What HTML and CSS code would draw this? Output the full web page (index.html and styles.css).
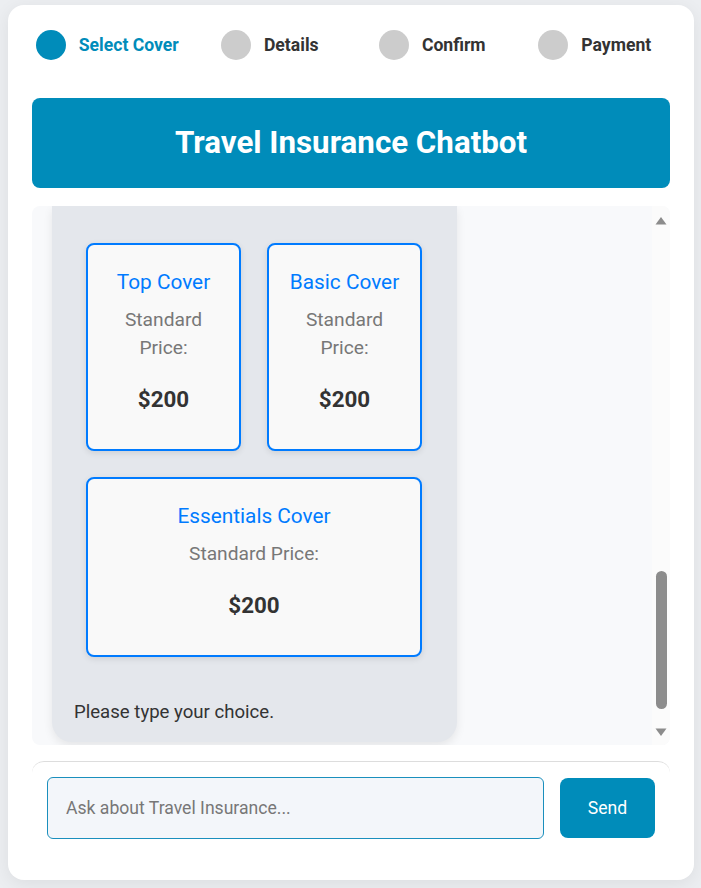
FILE: index.html
```html
<!DOCTYPE html>
<html lang="en">
<head>
<meta charset="utf-8">
<title>Travel Insurance Chatbot</title>
<link rel="stylesheet" href="styles.css">
</head>
<body>
<div class="app">
  <div class="steps">
    <div class="step active"><span class="dot"></span><span class="label">Select Cover</span></div>
    <div class="step"><span class="dot"></span><span class="label">Details</span></div>
    <div class="step"><span class="dot"></span><span class="label">Confirm</span></div>
    <div class="step"><span class="dot"></span><span class="label">Payment</span></div>
  </div>

  <div class="header">Travel Insurance Chatbot</div>

  <div class="chat">
    <div class="messages">
      <div class="msg bot">
        <div class="cards">
          <div class="card">
            <h3 class="card-title">Top Cover</h3>
            <p class="card-label">Standard Price:</p>
            <p class="card-price">$200</p>
          </div>
          <div class="card">
            <h3 class="card-title">Basic Cover</h3>
            <p class="card-label">Standard Price:</p>
            <p class="card-price">$200</p>
          </div>
          <div class="card wide">
            <h3 class="card-title">Essentials Cover</h3>
            <p class="card-label">Standard Price:</p>
            <p class="card-price">$200</p>
          </div>
        </div>
        <p class="msg-text">Please type your choice.</p>
      </div>
    </div>
    <div class="scrollbar">
      <svg class="arrow" width="12" height="9" viewBox="0 0 12 9"><path d="M6 1 L11.5 8.5 L0.5 8.5 Z" fill="#8c8c8c"/></svg>
      <div class="thumb"></div>
      <svg class="arrow" width="12" height="9" viewBox="0 0 12 9"><path d="M0.5 0.5 L11.5 0.5 L6 8 Z" fill="#8c8c8c"/></svg>
    </div>
  </div>

  <div class="input-area">
    <input class="input" type="text" placeholder="Ask about Travel Insurance...">
    <button class="send" type="button">Send</button>
  </div>
</div>
</body>
</html>
```

FILE: styles.css
```css
* { box-sizing: border-box; }

html, body {
  margin: 0;
  padding: 0;
}

body {
  background: #eceef1;
  font-family: Roboto, "Liberation Sans", Arial, sans-serif;
  color: #333;
  padding: 5px 7px 8px 8px;
}

.app {
  background: #ffffff;
  border-radius: 16px;
  box-shadow: 0 4px 18px rgba(0, 0, 0, 0.07);
  padding: 25px 24px 26px;
}

.steps {
  display: flex;
  margin: 0 -6px 38px;
}

.step {
  flex: 1;
  display: flex;
  align-items: center;
  justify-content: center;
  gap: 13px;
  height: 30px;
}

.dot {
  width: 30px;
  height: 30px;
  border-radius: 50%;
  background: #cccccc;
  flex: none;
}

.label {
  font-size: 17.6px;
  font-weight: 700;
  color: #333;
}

.step.active .dot { background: #008cba; }
.step.active .label { color: #008cba; }

.header {
  background: #008cba;
  color: #fff;
  border-radius: 8px;
  text-align: center;
  font-size: 31.3px;
  font-weight: 700;
  line-height: 38px;
  padding: 26px 10px;
  margin-bottom: 18px;
}

.chat {
  height: 539px;
  background: #f8f9fb;
  border-radius: 8px;
  overflow: hidden;
  display: flex;
}

.messages {
  flex: 1;
  display: flex;
  flex-direction: column;
  padding: 0 0 3px 20px;
}

.msg {
  flex: 1;
  display: flex;
  flex-direction: column;
  border-radius: 0 0 20px 20px;
  padding: 37px 22px 19px;
  box-shadow: 0 4px 10px rgba(0, 0, 0, 0.08);
  font-size: 18.6px;
  line-height: 22px;
}

.msg.bot {
  background: #e4e7ec;
  width: 405px;
}

.msg-text {
  margin: auto 0 0;
}

.cards {
  display: grid;
  grid-template-columns: 155px 155px;
  gap: 26px;
  margin: 0 0 0 12px;
}

.card {
  background: #f9f9f9;
  border: 2px solid #007bff;
  border-radius: 8px;
  box-shadow: 0 2px 6px rgba(0, 0, 0, 0.1);
  padding: 15px;
  text-align: center;
}

.card.wide {
  grid-column: 1 / 3;
}

.card-title {
  margin: 10px 0 12px;
  font-size: 20.8px;
  font-weight: 400;
  line-height: 24px;
  color: #007bff;
}

.card-label {
  margin: 0;
  font-size: 19.2px;
  line-height: 28px;
  color: #777;
}

.card-price {
  margin: 23px 0 21px;
  font-size: 22.4px;
  font-weight: 700;
  line-height: 28px;
  color: #333;
}

.scrollbar {
  width: 18px;
  flex: none;
  display: flex;
  flex-direction: column;
  align-items: center;
  padding: 10px 0 8px;
  background: #fbfbfb;
}

.arrow {
  display: block;
  flex: none;
}

.thumb {
  width: 11px;
  height: 138px;
  margin: auto 0 19px;
  border-radius: 6px;
  background: #8c8c8c;
}

.input-area {
  display: flex;
  gap: 16px;
  margin-top: 16px;
  padding: 15px;
  border-top: 1px solid #dddddd;
  border-radius: 12px;
}

.input {
  flex: 1;
  height: 62px;
  border: 1px solid #1a8fbd;
  border-radius: 6px;
  background: #f3f6fa;
  padding: 0 18px;
  font-family: Roboto, "Liberation Sans", Arial, sans-serif;
  font-size: 17.6px;
  color: #333;
  outline: none;
}

.input::placeholder {
  color: #777;
}

.send {
  width: 95px;
  height: 60px;
  margin-top: 1px;
  border: none;
  border-radius: 8px;
  background: #008cba;
  color: #fff;
  font-family: Roboto, "Liberation Sans", Arial, sans-serif;
  font-size: 17.6px;
  cursor: pointer;
}
```
